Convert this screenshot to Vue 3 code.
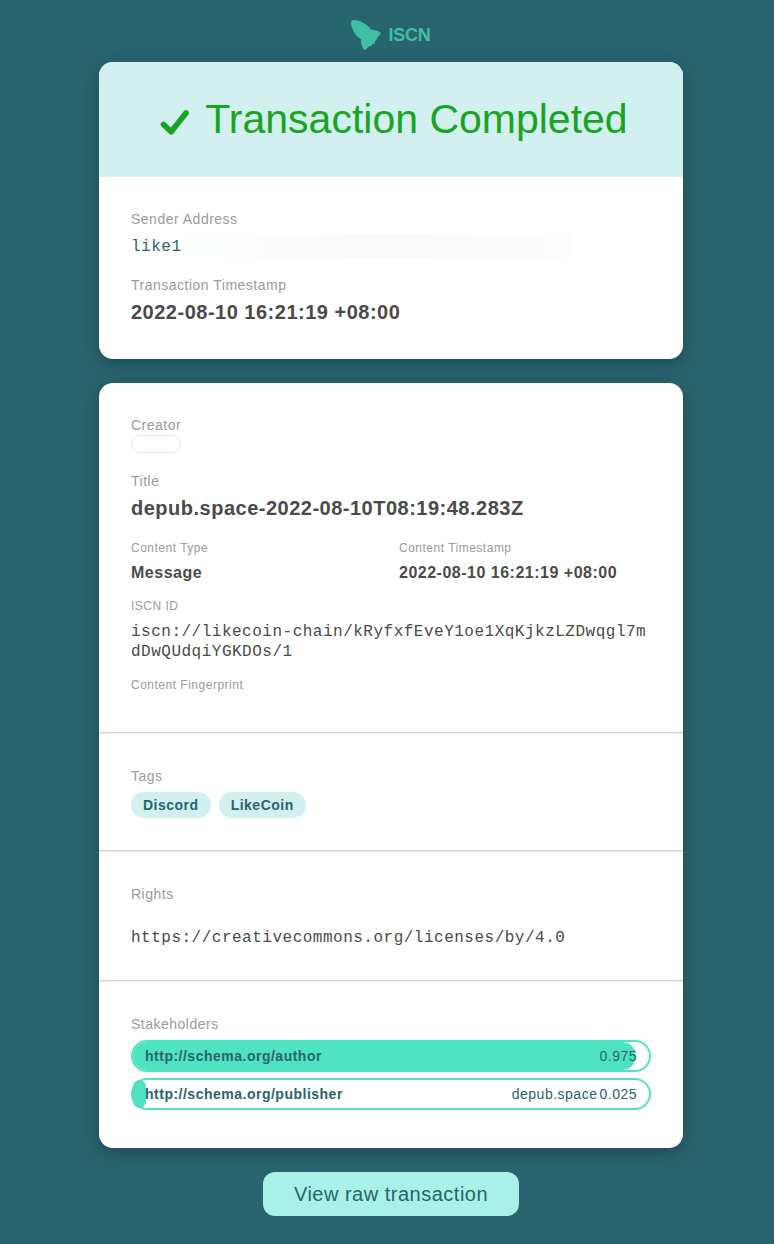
<script setup>
const tags = ['Discord', 'LikeCoin']
const stakeholders = [
  { role: 'http://schema.org/author', name: '', share: 0.975 },
  { role: 'http://schema.org/publisher', name: 'depub.space', share: 0.025 },
]
</script>

<template>
  <div class="page">
    <header class="brand">
      <svg class="logo" width="32" height="32" viewBox="0 0 32 32" aria-hidden="true">
        <path d="M1.2 2.2Q1.8 1 3.6 1.1C8.5 1.3 14.5 3.8 18 7.2L21.2 10.8C24.5 10.7 27.5 11.7 31 14C29.8 16.2 28.4 17 27.8 18.4L26.8 19L26.8 21L24.9 22.3L24.8 24.2L21.8 25.5L21.4 27L19.6 26.9C17.4 28.6 16.2 30.5 14.1 30.9C12 28.5 10.7 25 11.2 20.6L7.6 17.8C3.8 14 1.3 8.2 1.1 4Z" />
      </svg>
      <span>ISCN</span>
    </header>

    <main>
      <section class="card">
        <div class="status">
          <svg class="check" width="30" height="28" viewBox="0 0 30 28" aria-hidden="true">
            <path d="M3.5 15.4L11.2 22.8L26 4" />
          </svg>
          <h1>Transaction Completed</h1>
        </div>
        <div class="summary">
          <div class="label">Sender Address</div>
          <div class="address"><span>like1</span><i class="mask"></i></div>
          <div class="label">Transaction Timestamp</div>
          <div class="value large">2022-08-10 16:21:19 +08:00</div>
        </div>
      </section>

      <section class="card details">
        <div class="block general">
          <div class="label">Creator</div>
          <div class="creator"></div>
          <div class="label">Title</div>
          <div class="value large">depub.space-2022-08-10T08:19:48.283Z</div>
          <div class="columns">
            <div>
              <div class="label small">Content Type</div>
              <div class="value">Message</div>
            </div>
            <div>
              <div class="label small">Content Timestamp</div>
              <div class="value">2022-08-10 16:21:19 +08:00</div>
            </div>
          </div>
          <div class="label small">ISCN ID</div>
          <div class="mono id">iscn://likecoin-chain/kRyfxfEveY1oe1XqKjkzLZDwqgl7mdDwQUdqiYGKDOs/1</div>
          <div class="label small">Content Fingerprint</div>
        </div>
        <div class="block tags-block">
          <div class="label">Tags</div>
          <div class="tags">
            <span v-for="tag in tags" :key="tag" class="tag">{{ tag }}</span>
          </div>
        </div>
        <div class="block rights">
          <div class="label">Rights</div>
          <div class="mono">https://creativecommons.org/licenses/by/4.0</div>
        </div>
        <div class="block holders">
          <div class="label">Stakeholders</div>
          <div v-for="s in stakeholders" :key="s.role" class="bar">
            <div class="fill" :style="{ width: s.share * 100 + '%' }"></div>
            <b>{{ s.role }}</b>
            <span class="name">{{ s.name }}</span>
            <span>{{ s.share }}</span>
          </div>
        </div>
      </section>

      <button class="raw">View raw transaction</button>
    </main>
  </div>
</template>

<style>
body {
  background: #28646e;
}
</style>

<style scoped>
.page {
  box-sizing: border-box;
  height: 1244px;
  padding: 0 91px 0 99px;
  background: #28646e;
  font-family: "Liberation Sans", Arial, sans-serif;
  color: #4a4a4a;
  letter-spacing: 0.5px;
}
.brand {
  height: 62px;
  box-sizing: border-box;
  padding: 7px 2px 0 0;
  display: flex;
  align-items: center;
  justify-content: center;
  gap: 7px;
  color: #40bfa5;
  font-size: 18px;
  font-weight: bold;
  letter-spacing: -0.3px;
}
.brand span {
  padding-top: 2px;
}
.logo {
  fill: #40bfa5;
}
main {
  display: flex;
  flex-direction: column;
}
.card {
  background: #fff;
  border-radius: 14px;
  box-shadow: 0 4px 16px rgba(0, 0, 0, 0.25);
  margin-bottom: 24px;
  overflow: hidden;
}
.status {
  height: 115px;
  background: #d2f0f0;
  display: flex;
  align-items: center;
  justify-content: center;
  gap: 15px;
  padding-left: 6px;
  box-sizing: border-box;
  color: #19a41f;
}
.check {
  margin-top: 6px;
  fill: none;
  stroke: #19a41f;
  stroke-width: 5.6;
  stroke-linecap: round;
  stroke-linejoin: round;
}
h1 {
  margin: 0;
  padding-bottom: 2px;
  font-size: 41px;
  font-weight: normal;
  line-height: 48px;
  letter-spacing: 0;
}
.summary {
  height: 182px;
  box-sizing: border-box;
  padding: 32px;
}
.label {
  color: #9b9b9b;
  font-size: 14px;
  line-height: 20px;
}
.label.small {
  font-size: 12px;
  line-height: 16px;
}
.value {
  font-size: 16px;
  font-weight: bold;
  line-height: 20px;
  margin-top: 7px;
}
.value.large {
  font-size: 20px;
  line-height: 24px;
  margin-top: 5px;
}
.mono {
  font-family: "Liberation Mono", "Courier New", monospace;
  font-size: 16px;
  line-height: 20px;
}
.address {
  display: flex;
  align-items: center;
  height: 24px;
  margin: 5px 0 17px;
  color: #28646e;
  font-family: "Liberation Mono", "Courier New", monospace;
  font-size: 16px;
}
.address span {
  padding-top: 2px;
}
.mask {
  width: 390px;
  height: 24px;
  background: linear-gradient(90deg, #fdfefe, #fbfbfb 50%, #fdfdfd);
}
.block {
  box-sizing: border-box;
  padding: 32px;
}
.block + .block {
  border-top: 1px solid #d5d5d5;
  box-shadow: inset 0 1px #ececec;
}
.general {
  height: 349px;
}
.creator {
  box-sizing: border-box;
  width: 50px;
  height: 18px;
  margin-bottom: 18px;
  border: 1px solid #e6e6e6;
  border-radius: 9px;
}
.columns {
  display: grid;
  grid-template-columns: 268px 1fr;
  margin: 20px 0 15px;
}
.id {
  margin: 8px 0 15px;
  word-break: break-all;
}
.tags-block {
  height: 118px;
  padding-top: 33px;
}
.tags {
  display: flex;
  gap: 8px;
  margin-top: 6px;
}
.tag {
  padding: 0 12px;
  border-radius: 13px;
  background: #d2f0f0;
  color: #28646e;
  font-size: 14px;
  font-weight: bold;
  line-height: 26px;
}
.rights {
  height: 130px;
  padding-top: 33px;
}
.rights .mono {
  margin-top: 24px;
}
.holders {
  height: 168px;
  padding-top: 33px;
}
.holders .label {
  margin-bottom: 6px;
}
.bar {
  position: relative;
  display: flex;
  align-items: center;
  gap: 2px;
  box-sizing: border-box;
  height: 32px;
  margin-bottom: 6px;
  padding: 0 12px;
  border: 2px solid #50e3c2;
  border-radius: 16px;
  color: #28646e;
  font-size: 14px;
}
.fill {
  position: absolute;
  left: 0;
  top: 0;
  height: 28px;
  min-width: 13px;
  border-radius: 14px;
  background: #50e3c2;
}
.bar b,
.bar span {
  position: relative;
}
.name {
  margin-left: auto;
}
.raw {
  align-self: center;
  width: 256px;
  height: 44px;
  padding: 0;
  border: 0;
  border-radius: 12px;
  background: #aaf1e7;
  color: #28646e;
  font-family: inherit;
  font-size: 20px;
  letter-spacing: 0.5px;
}
</style>
